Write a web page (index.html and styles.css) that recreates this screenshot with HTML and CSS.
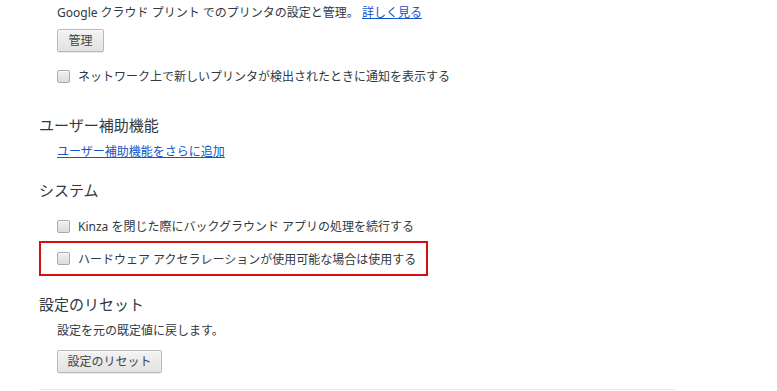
FILE: index.html
```html
<!DOCTYPE html>
<html lang="ja">
<head>
<meta charset="utf-8">
<title>設定</title>
<link rel="stylesheet" href="styles.css">
</head>
<body>
<div class="page">
  <div class="content">
    <p class="line">Google クラウド プリント でのプリンタの設定と管理。 <a class="link" href="#">詳しく見る</a></p>
    <button class="btn btn-manage">管理</button>
    <label class="check-row row-notify"><span class="checkbox"></span><span>ネットワーク上で新しいプリンタが検出されたときに通知を表示する</span></label>
  </div>

  <h3 class="heading h-access">ユーザー補助機能</h3>
  <div class="content">
    <p class="line line-link"><a class="link" href="#">ユーザー補助機能をさらに追加</a></p>
  </div>

  <h3 class="heading h-system">システム</h3>
  <div class="content">
    <label class="check-row row-kinza"><span class="checkbox"></span><span>Kinza を閉じた際にバックグラウンド アプリの処理を続行する</span></label>
  </div>
  <div class="highlight">
    <label class="check-row row-hw"><span class="checkbox"></span><span>ハードウェア アクセラレーションが使用可能な場合は使用する</span></label>
  </div>

  <h3 class="heading h-reset">設定のリセット</h3>
  <div class="content">
    <p class="line line-reset">設定を元の既定値に戻します。</p>
    <button class="btn btn-reset">設定のリセット</button>
  </div>
  <div class="divider"></div>
</div>
</body>
</html>
```

FILE: styles.css
```css
html, body {
  margin: 0;
  padding: 0;
  background: #ffffff;
}

body {
  font-family: "Noto Sans", "Noto Sans CJK JP", sans-serif;
  font-size: 12px;
  color: #303942;
}

.page {
  padding: 4px 0 0 39px;
  width: 638px;
}

.content {
  padding-left: 18px;
}

.line {
  margin: 0;
  line-height: 18px;
  height: 18px;
  white-space: nowrap;
}

.link {
  color: #1155cc;
  text-decoration: underline;
}

.btn {
  display: block;
  height: 23px;
  padding: 0;
  font-family: "Noto Sans", "Noto Sans CJK JP", sans-serif;
  font-size: 12px;
  line-height: 21px;
  color: #444444;
  background: linear-gradient(#f3f3f3, #e2e2e2);
  border: 1px solid #b8b8b8;
  border-radius: 2px;
  box-shadow: 0 1px 0 rgba(0, 0, 0, 0.08), inset 0 1px 2px rgba(255, 255, 255, 0.75);
}

.btn-manage {
  margin-top: 7px;
  width: 47px;
}

.btn-reset {
  margin-top: 10px;
  width: 105px;
}

.check-row {
  display: flex;
  align-items: center;
  gap: 8px;
  height: 20px;
  white-space: nowrap;
}

.checkbox {
  flex: none;
  width: 11px;
  height: 11px;
  border: 1px solid #a9a9a9;
  border-radius: 2px;
  background: linear-gradient(#f0f0f0, #dcdcdc);
  box-shadow: inset 0 1px 1px rgba(255, 255, 255, 0.8);
}

.row-notify {
  margin-top: 14px;
}

.heading {
  margin: 0;
  font-size: 15px;
  font-weight: normal;
  line-height: 20px;
  height: 20px;
  color: #303942;
}

.h-access {
  margin-top: 29px;
}

.line-link {
  margin-top: 8px;
}

.h-system {
  margin-top: 19px;
}

.row-kinza {
  margin-top: 16px;
}

.highlight {
  margin-top: 5px;
  width: 369px;
  height: 31px;
  border: 2px solid #d11010;
  padding-left: 16px;
  display: flex;
  align-items: center;
}

.row-hw {
  height: 31px;
}

.h-reset {
  margin-top: 18px;
}

.line-reset {
  margin-top: 8px;
}

.divider {
  margin-top: 16px;
  width: 636px;
  border-top: 1px solid #e8e8e8;
}
```
